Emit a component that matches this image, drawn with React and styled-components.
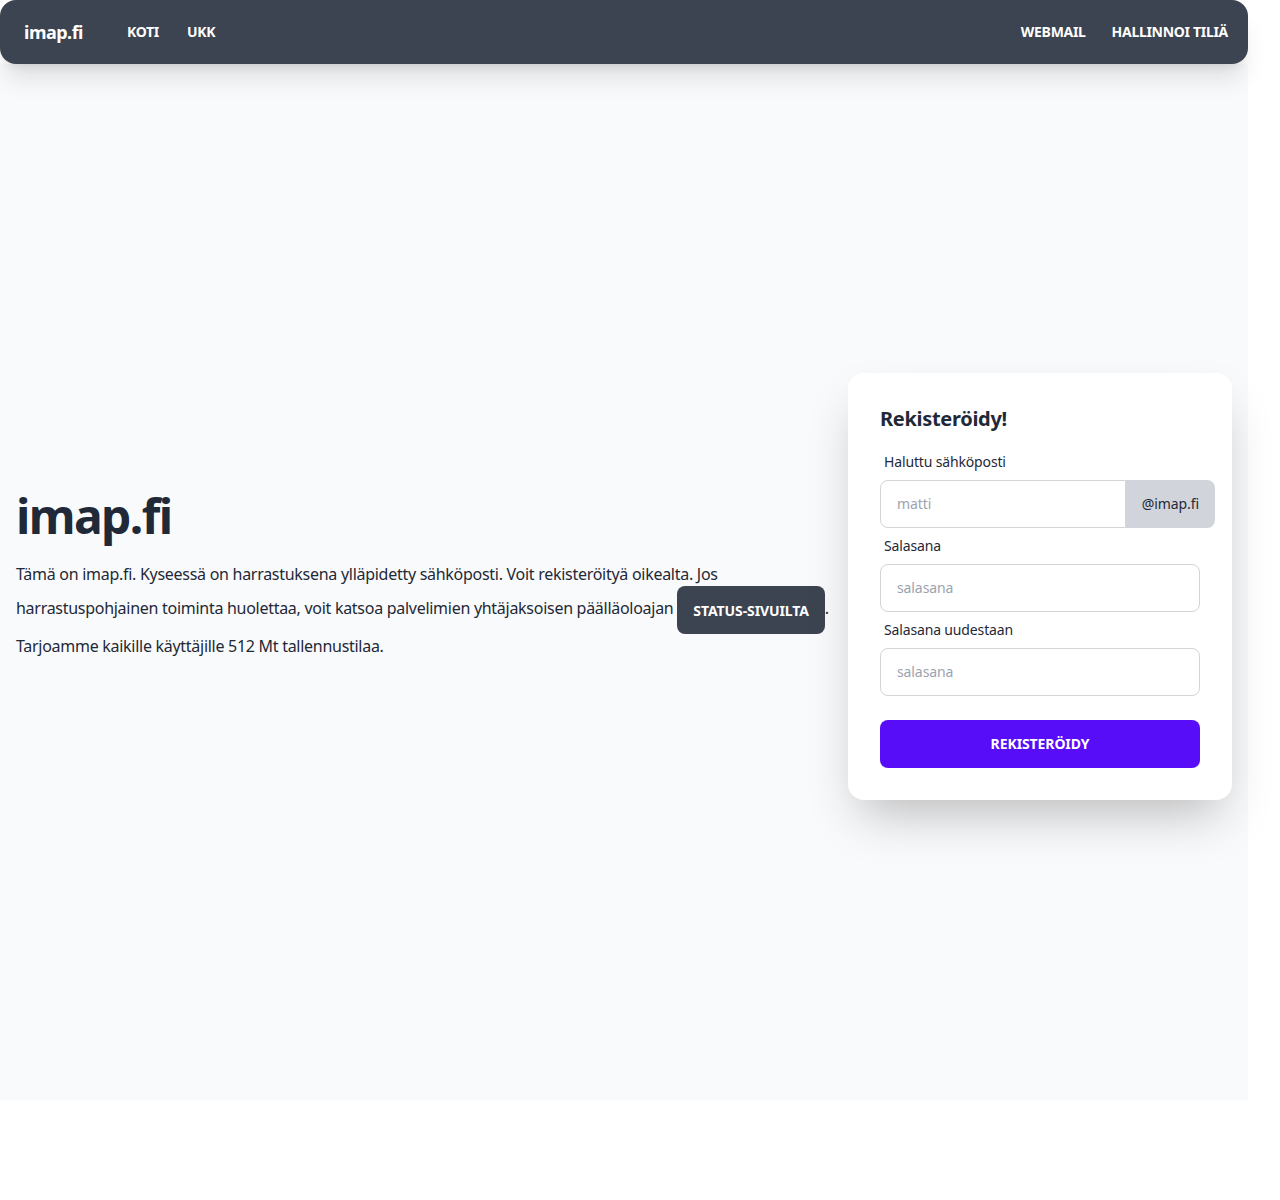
import React from "react";
import styled, { createGlobalStyle } from "styled-components";

const GlobalStyle = createGlobalStyle`
  body {
    margin: 0;
    background: #ffffff;
    font-family: "Noto Sans", "Open Sans", sans-serif;
    color: #1f2937;
  }
  * {
    box-sizing: border-box;
  }
`;

const Page = styled.div`
  width: 1248px;
`;

const Navbar = styled.nav`
  position: relative;
  z-index: 2;
  display: flex;
  align-items: center;
  height: 64px;
  padding: 0 7px 0 8px;
  background: #3d4451;
  border-radius: 16px;
  box-shadow: 0 20px 25px -5px rgba(0, 0, 0, 0.1),
    0 8px 10px -6px rgba(0, 0, 0, 0.1);
`;

const Logo = styled.a`
  padding: 0 16px;
  color: #ffffff;
  font-size: 18px;
  font-weight: 700;
  letter-spacing: -0.5px;
  text-decoration: none;
`;

const Menu = styled.ul`
  display: flex;
  list-style: none;
  margin: 0 0 0 ${(p) => p.$offset || 0}px;
  padding: 0;
  ${(p) => p.$right && "margin-left: auto;"}
`;

const MenuItem = styled.li`
  padding: 0 ${(p) => p.$pad || 14}px;
  color: #ffffff;
  font-size: 14px;
  font-weight: 700;
  letter-spacing: -0.3px;
  text-transform: uppercase;
  line-height: 64px;
  cursor: pointer;
`;

const Hero = styled.main`
  display: flex;
  align-items: center;
  height: 1036px;
  padding: 8px 16px 0;
  background: #f9fafb;
`;

const HeroContent = styled.div`
  display: flex;
  align-items: center;
  gap: 16px;
  width: 100%;
`;

const Intro = styled.div`
  flex: 1;
`;

const Title = styled.h1`
  margin: 0;
  padding-top: 3px;
  font-size: 48px;
  line-height: 45px;
  font-weight: 700;
  letter-spacing: -1.6px;
  color: #1f2937;
`;

const Text = styled.p`
  margin: 0;
  padding: 24px 0;
  font-size: 16px;
  line-height: 24px;
  letter-spacing: -0.28px;
`;

const Button = styled.button`
  display: inline-flex;
  align-items: center;
  justify-content: center;
  height: 48px;
  padding: 0 16px;
  border: none;
  border-radius: 8px;
  background: ${(p) => (p.$primary ? "#570df8" : "#3d4451")};
  color: #ffffff;
  font-family: inherit;
  font-size: 14px;
  font-weight: 700;
  letter-spacing: -0.1px;
  text-transform: uppercase;
  vertical-align: middle;
  cursor: pointer;
  ${(p) => p.$block && "width: 100%; margin-top: 24px;"}
`;

const Card = styled.div`
  flex-shrink: 0;
  width: 384px;
  padding: 32px;
  background: #ffffff;
  border-radius: 16px;
  box-shadow: 0 25px 50px -12px rgba(0, 0, 0, 0.25);
`;

const CardTitle = styled.h2`
  margin: 0 0 11px;
  font-size: 20px;
  line-height: 28px;
  font-weight: 700;
  letter-spacing: -0.3px;
`;

const Label = styled.label`
  display: block;
  padding: 8px 4px;
  font-size: 14px;
  line-height: 20px;
  letter-spacing: -0.15px;
`;

const Group = styled.div`
  display: flex;
  width: 335px;
`;

const Input = styled.input`
  display: block;
  width: ${(p) => (p.$grouped ? "246px" : "100%")};
  height: 48px;
  padding: 0 16px;
  border: 1px solid #d4d4d8;
  border-radius: ${(p) => (p.$grouped ? "8px 0 0 8px" : "8px")};
  background: #ffffff;
  font-family: inherit;
  font-size: 14px;
  letter-spacing: -0.1px;
  color: #1f2937;
  outline: none;

  &::placeholder {
    color: #9ca3af;
  }
`;

const Addon = styled.span`
  display: flex;
  align-items: center;
  flex: 1;
  padding: 0 16px;
  background: #d1d5db;
  border-radius: 0 8px 8px 0;
  font-size: 14px;
  letter-spacing: -0.1px;
`;

const App = () => {
  return (
    <Page>
      <GlobalStyle />
      <Navbar>
        <Logo href="#">imap.fi</Logo>
        <Menu $offset={14}>
          <MenuItem>Koti</MenuItem>
          <MenuItem>Ukk</MenuItem>
        </Menu>
        <Menu $right>
          <MenuItem $pad={13}>Webmail</MenuItem>
          <MenuItem $pad={13}>Hallinnoi tiliä</MenuItem>
        </Menu>
      </Navbar>
      <Hero>
        <HeroContent>
          <Intro>
            <Title>imap.fi</Title>
            <Text>
              Tämä on imap.fi. Kyseessä on harrastuksena ylläpidetty
              sähköposti. Voit rekisteröityä oikealta. Jos harrastuspohjainen
              toiminta huolettaa, voit katsoa palvelimien yhtäjaksoisen
              päälläoloajan <Button>Status-sivuilta</Button>. Tarjoamme kaikille
              käyttäjille 512 Mt tallennustilaa.
            </Text>
          </Intro>
          <Card>
            <CardTitle>Rekisteröidy!</CardTitle>
            <Label>Haluttu sähköposti</Label>
            <Group>
              <Input $grouped placeholder="matti" />
              <Addon>@imap.fi</Addon>
            </Group>
            <Label>Salasana</Label>
            <Input type="password" placeholder="salasana" />
            <Label>Salasana uudestaan</Label>
            <Input type="password" placeholder="salasana" />
            <Button $primary $block>
              Rekisteröidy
            </Button>
          </Card>
        </HeroContent>
      </Hero>
    </Page>
  );
};

export default App;
